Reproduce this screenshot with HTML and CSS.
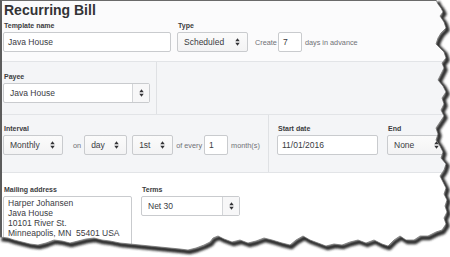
FILE: index.html
```html
<!DOCTYPE html>
<html>
<head>
<meta charset="utf-8">
<link rel="stylesheet" href="styles.css">
</head>
<body>
<div class="frame">
  <div class="paper">
    <section class="sec-top">
      <h1 class="title">Recurring Bill</h1>
      <div class="row">
        <div class="field">
          <div class="lbl">Template name</div>
          <div class="input w-template">Java House</div>
        </div>
        <div class="field">
          <div class="lbl">Type</div>
          <div class="inline">
            <div class="select w-type"><span>Scheduled</span><svg class="arr" viewBox="0 0 5 9"><path d="M0 3.6L2.5 0.4L5 3.6Z M0 5.4L2.5 8.6L5 5.4Z"/></svg></div>
            <span class="hint h-create">Create</span>
            <div class="input w-small">7</div>
            <span class="hint h-days">days in advance</span>
          </div>
        </div>
      </div>
    </section>

    <section class="sec-payee">
      <div class="cell-payee">
        <div class="lbl">Payee</div>
        <div class="combo w-payee"><span class="combo-text">Java House</span><span class="combo-btn"><svg class="arr" viewBox="0 0 5 9"><path d="M0 3.6L2.5 0.4L5 3.6Z M0 5.4L2.5 8.6L5 5.4Z"/></svg></span></div>
      </div>
      <div></div>
    </section>

    <section class="sec-interval">
      <div class="cell-interval">
        <div class="lbl">Interval</div>
        <div class="inline">
          <div class="select w-monthly"><span>Monthly</span><svg class="arr" viewBox="0 0 5 9"><path d="M0 3.6L2.5 0.4L5 3.6Z M0 5.4L2.5 8.6L5 5.4Z"/></svg></div>
          <span class="hint h-on">on</span>
          <div class="select w-day"><span>day</span><svg class="arr" viewBox="0 0 5 9"><path d="M0 3.6L2.5 0.4L5 3.6Z M0 5.4L2.5 8.6L5 5.4Z"/></svg></div>
          <div class="select w-first"><span>1st</span><svg class="arr" viewBox="0 0 5 9"><path d="M0 3.6L2.5 0.4L5 3.6Z M0 5.4L2.5 8.6L5 5.4Z"/></svg></div>
          <span class="hint h-every">of every</span>
          <div class="input w-small">1</div>
          <span class="hint h-month">month(s)</span>
        </div>
      </div>
      <div class="cell-dates">
        <div class="field">
          <div class="lbl">Start date</div>
          <div class="input w-date">11/01/2016</div>
        </div>
        <div class="field">
          <div class="lbl">End</div>
          <div class="select w-end"><span>None</span><svg class="arr" viewBox="0 0 5 9"><path d="M0 3.6L2.5 0.4L5 3.6Z M0 5.4L2.5 8.6L5 5.4Z"/></svg></div>
        </div>
      </div>
    </section>

    <section class="sec-mail">
      <div class="field">
        <div class="lbl">Mailing address</div>
        <div class="textarea">Harper Johansen<br>Java House<br>10101 River St.<br>Minneapolis, MN  55401 USA</div>
      </div>
      <div class="field">
        <div class="lbl">Terms</div>
        <div class="combo w-terms"><span class="combo-text">Net 30</span><span class="combo-btn"><svg class="arr" viewBox="0 0 5 9"><path d="M0 3.6L2.5 0.4L5 3.6Z M0 5.4L2.5 8.6L5 5.4Z"/></svg></span></div>
      </div>
    </section>
  </div>

  <svg class="tear" width="450" height="257" viewBox="0 0 450 257">
    <defs>
      <clipPath id="outside">
        <path d="M436,0 L438,4 441,8 443,12 440,16 444,22 446,28 441,33 438,38 436,44 440,48 444,52 446,58 442,63 444,68 441,74 438,80 443,86 446,92 442,98 444,104 441,110 444,116 440,122 436,128 438,134 436,140 440,146 443,152 441,158 446,164 444,170 440,176 443,182 446,188 444,194 447,200 445,206 447,212 444,218 446,224 442,230 436,232 428,236 420,236 414,240 406,240 400,236 394,240 388,246 382,244 374,240 366,243 358,240 350,242 342,245 334,244 326,246 318,243 310,240 303,236 296,240 290,245 282,243 272,240 264,238 256,241 248,243 240,240 232,242 224,239 218,236 213,238 210,242 204,245 196,248 188,250 180,249 170,248 160,247 150,246 140,245 130,244 120,243 110,241 102,240 94,238 86,239 78,241 70,243 62,241 54,240 46,243 38,245 30,244 22,242 14,240 8,238 0,237 L0,257 L450,257 L450,0 Z"/>
      </clipPath>
      <filter id="blur" x="-5%" y="-5%" width="110%" height="110%">
        <feGaussianBlur stdDeviation="1.1"/>
      </filter>
    </defs>
    <path fill="#ffffff" d="M436,0 L438,4 441,8 443,12 440,16 444,22 446,28 441,33 438,38 436,44 440,48 444,52 446,58 442,63 444,68 441,74 438,80 443,86 446,92 442,98 444,104 441,110 444,116 440,122 436,128 438,134 436,140 440,146 443,152 441,158 446,164 444,170 440,176 443,182 446,188 444,194 447,200 445,206 447,212 444,218 446,224 442,230 436,232 428,236 420,236 414,240 406,240 400,236 394,240 388,246 382,244 374,240 366,243 358,240 350,242 342,245 334,244 326,246 318,243 310,240 303,236 296,240 290,245 282,243 272,240 264,238 256,241 248,243 240,240 232,242 224,239 218,236 213,238 210,242 204,245 196,248 188,250 180,249 170,248 160,247 150,246 140,245 130,244 120,243 110,241 102,240 94,238 86,239 78,241 70,243 62,241 54,240 46,243 38,245 30,244 22,242 14,240 8,238 0,237 L0,257 L450,257 L450,0 Z"/>
    <g clip-path="url(#outside)">
      <polyline fill="none" stroke="#2e2e2e" stroke-width="4.5" stroke-linejoin="round" transform="translate(1.5,2)" filter="url(#blur)" points="436,0 438,4 441,8 443,12 440,16 444,22 446,28 441,33 438,38 436,44 440,48 444,52 446,58 442,63 444,68 441,74 438,80 443,86 446,92 442,98 444,104 441,110 444,116 440,122 436,128 438,134 436,140 440,146 443,152 441,158 446,164 444,170 440,176 443,182 446,188 444,194 447,200 445,206 447,212 444,218 446,224 442,230 436,232 428,236 420,236 414,240 406,240 400,236 394,240 388,246 382,244 374,240 366,243 358,240 350,242 342,245 334,244 326,246 318,243 310,240 303,236 296,240 290,245 282,243 272,240 264,238 256,241 248,243 240,240 232,242 224,239 218,236 213,238 210,242 204,245 196,248 188,250 180,249 170,248 160,247 150,246 140,245 130,244 120,243 110,241 102,240 94,238 86,239 78,241 70,243 62,241 54,240 46,243 38,245 30,244 22,242 14,240 8,238 0,237"/>
    </g>
    <polyline fill="none" stroke="#666666" stroke-width="0.7" points="436,0 438,4 441,8 443,12 440,16 444,22 446,28 441,33 438,38 436,44 440,48 444,52 446,58 442,63 444,68 441,74 438,80 443,86 446,92 442,98 444,104 441,110 444,116 440,122 436,128 438,134 436,140 440,146 443,152 441,158 446,164 444,170 440,176 443,182 446,188 444,194 447,200 445,206 447,212 444,218 446,224 442,230 436,232 428,236 420,236 414,240 406,240 400,236 394,240 388,246 382,244 374,240 366,243 358,240 350,242 342,245 334,244 326,246 318,243 310,240 303,236 296,240 290,245 282,243 272,240 264,238 256,241 248,243 240,240 232,242 224,239 218,236 213,238 210,242 204,245 196,248 188,250 180,249 170,248 160,247 150,246 140,245 130,244 120,243 110,241 102,240 94,238 86,239 78,241 70,243 62,241 54,240 46,243 38,245 30,244 22,242 14,240 8,238 0,237"/>
  </svg>
</div>
</body>
</html>
```

FILE: styles.css
```css
html, body {
  margin: 0;
  padding: 0;
  background: #ffffff;
}

.frame {
  position: relative;
  width: 450px;
  height: 257px;
  overflow: hidden;
}

.paper {
  box-sizing: border-box;
  width: 450px;
  height: 257px;
  border-left: 2px solid #5c5c5c;
  border-top: 1px solid #6a6a6a;
  font-family: "Liberation Sans", Arial, sans-serif;
  color: #393a3d;
  background: #ffffff;
}

.tear {
  position: absolute;
  left: 0;
  top: 0;
  pointer-events: none;
}

/* ---------- sections ---------- */
.sec-top {
  background: #fbfbfc;
  padding: 1px 0 9px 1px;
  border-bottom: 1px solid #e2e4e7;
}

.title {
  margin: 0;
  font-size: 14px;
  line-height: 16px;
  font-weight: bold;
  color: #333336;
  padding-left: 1px;
}

.row {
  display: flex;
  gap: 6px;
  margin-top: 3px;
}

.sec-payee {
  display: grid;
  grid-template-columns: 155px 1fr;
  height: 53px;
  box-sizing: border-box;
  background: #f4f5f7;
  border-bottom: 1px solid #e2e4e7;
}

.cell-payee {
  box-sizing: border-box;
  border-right: 1px solid #dfe1e4;
  padding: 10px 0 0 1px;
}

.sec-interval {
  display: grid;
  grid-template-columns: 267px 1fr;
  height: 58px;
  box-sizing: border-box;
  background: #f4f5f7;
  border-bottom: 1px solid #e2e4e7;
}

.cell-interval {
  box-sizing: border-box;
  border-right: 1px solid #dfe1e4;
  padding: 9px 0 0 1px;
}

.cell-dates {
  display: flex;
  gap: 9px;
  padding: 9px 0 0 8px;
}

.sec-mail {
  display: flex;
  gap: 9px;
  padding: 12px 0 0 1px;
  background: #ffffff;
}

/* ---------- fields ---------- */
.lbl {
  font-size: 7px;
  line-height: 9px;
  font-weight: bold;
  color: #3b3c40;
  margin-bottom: 2px;
  padding-left: 1px;
}

.inline {
  display: flex;
  align-items: center;
}

.input {
  box-sizing: border-box;
  height: 20px;
  border: 1px solid #c9cbce;
  border-radius: 2px;
  background: #ffffff;
  font-size: 8.5px;
  line-height: 18px;
  padding: 0 4px;
  color: #3a3b3f;
  white-space: nowrap;
}

.select {
  box-sizing: border-box;
  height: 20px;
  border: 1px solid #c9cbce;
  border-radius: 2px;
  background: linear-gradient(#fbfbfb, #f3f3f4);
  display: flex;
  align-items: center;
  justify-content: space-between;
  padding: 0 7px 0 6px;
  font-size: 8.5px;
  color: #3a3b3f;
  white-space: nowrap;
}

.combo {
  box-sizing: border-box;
  height: 20px;
  border: 1px solid #c9cbce;
  border-radius: 2px;
  background: #ffffff;
  display: flex;
  align-items: stretch;
  font-size: 8.5px;
  color: #3a3b3f;
}

.combo-text {
  flex: 1;
  line-height: 18px;
  padding-left: 6px;
  white-space: nowrap;
}

.combo-btn {
  width: 16px;
  border-left: 1px solid #d3d5d8;
  background: #f7f7f8;
  display: flex;
  align-items: center;
  justify-content: center;
}

.arr {
  width: 5px;
  height: 8px;
  fill: #333336;
  flex: none;
}

.textarea {
  box-sizing: border-box;
  width: 129px;
  height: 52px;
  border: 1px solid #c9cbce;
  border-radius: 2px;
  background: #ffffff;
  font-size: 8.5px;
  line-height: 10px;
  padding: 1px 4px;
  color: #3a3b3f;
  white-space: pre;
  overflow: hidden;
}

.hint {
  font-size: 7.3px;
  color: #707176;
  white-space: nowrap;
}

/* ---------- widths ---------- */
.w-template { width: 168px; }
.w-type { width: 71px; }
.w-small { width: 24px; }
.w-payee { width: 147px; }
.w-monthly { width: 60px; }
.w-day { width: 43px; }
.w-first { width: 41px; margin-left: 5px; }
.w-date { width: 101px; }
.w-end { width: 60px; }
.w-terms { width: 99px; }

.h-create { margin: 0 1px 0 7px; }
.h-days { margin-left: 3px; }
.h-on { margin: 0 3px 0 10px; }
.h-every { margin: 0 2px 0 3px; }
.h-month { margin-left: 3px; }
```
